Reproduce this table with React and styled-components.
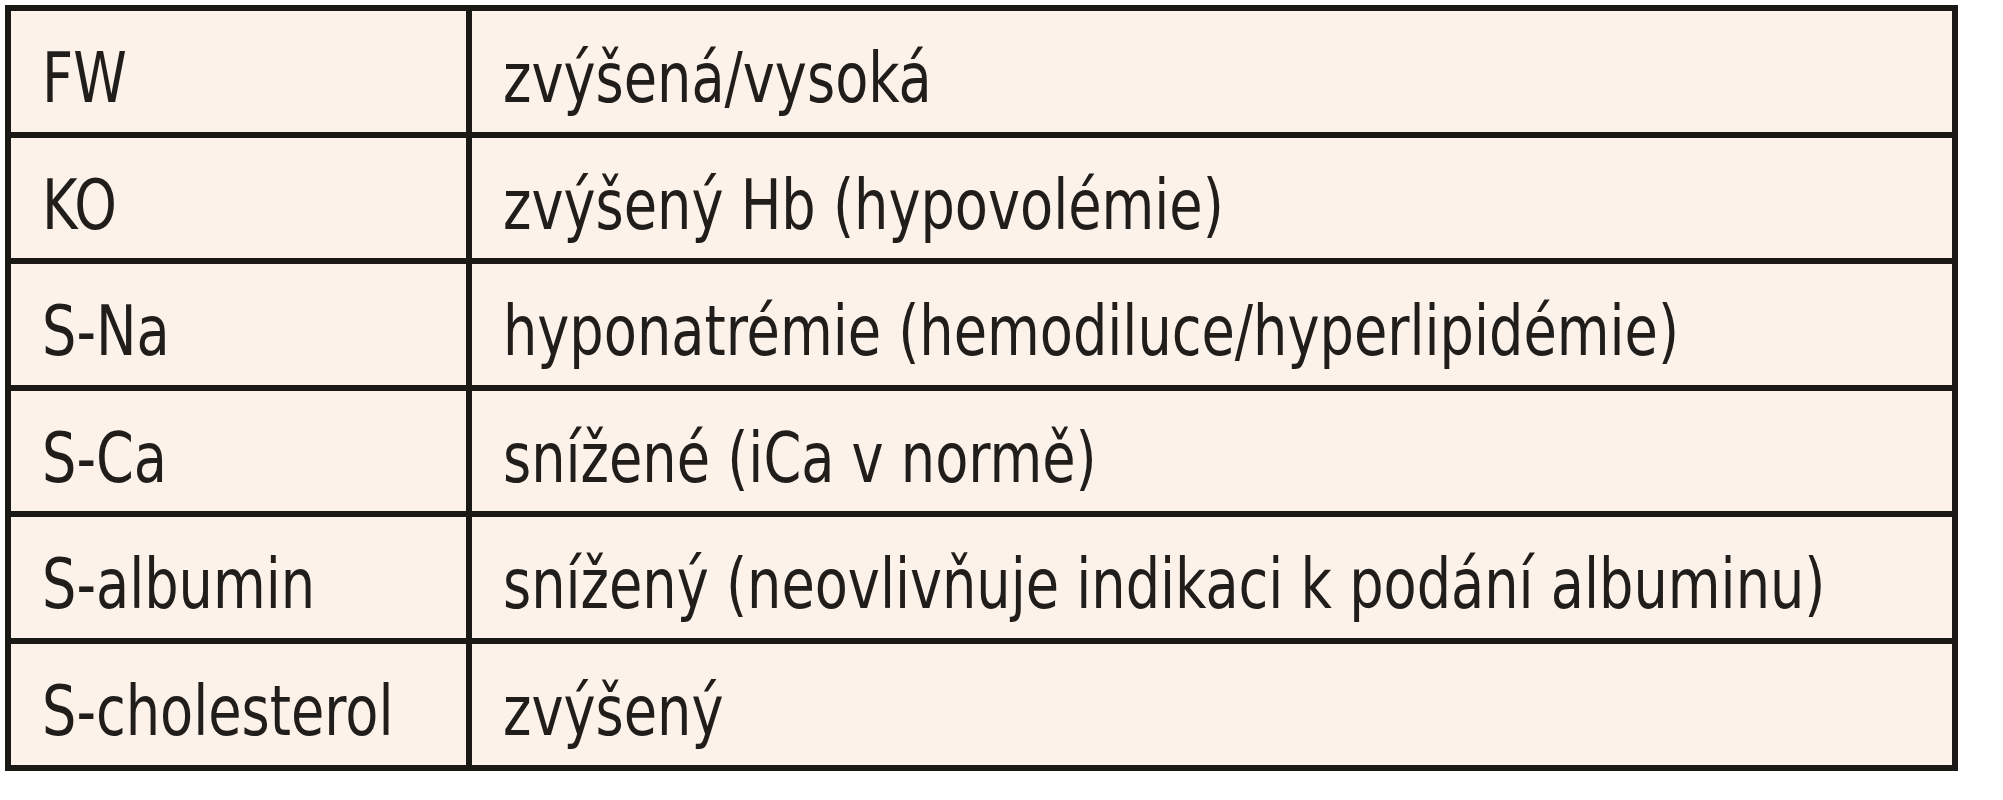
import React from "react";
import styled, { createGlobalStyle } from "styled-components";

const GlobalStyle = createGlobalStyle`
  html, body {
    margin: 0;
    padding: 0;
    background: #ffffff;
  }
`;

const Page = styled.div`
  padding: 5px;
`;

const Table = styled.div`
  display: grid;
  grid-template-columns: 455px 1480px;
  grid-auto-rows: 120.6px;
  gap: 6px;
  padding: 6px;
  width: max-content;
  background: #1b1915;
`;

const Cell = styled.div`
  box-sizing: border-box;
  background: #fdf2ea;
  padding: 14px 0 0 31px;
  white-space: nowrap;
`;

const Text = styled.span`
  display: inline-block;
  font-family: "DejaVu Sans Condensed", "DejaVu Sans", sans-serif;
  font-stretch: condensed;
  font-size: 70px;
  line-height: 106px;
  color: #201d1b;
  transform: scaleX(0.86);
  transform-origin: left center;
`;

const rows = [
  ["FW", "zvýšená/vysoká"],
  ["KO", "zvýšený Hb (hypovolémie)"],
  ["S-Na", "hyponatrémie (hemodiluce/hyperlipidémie)"],
  ["S-Ca", "snížené (iCa v normě)"],
  ["S-albumin", "snížený (neovlivňuje indikaci k podání albuminu)"],
  ["S-cholesterol", "zvýšený"],
];

export default function App() {
  return (
    <>
      <GlobalStyle />
      <Page>
        <Table>
          {rows.map(([k, v]) => (
            <React.Fragment key={k}>
              <Cell>
                <Text>{k}</Text>
              </Cell>
              <Cell>
                <Text>{v}</Text>
              </Cell>
            </React.Fragment>
          ))}
        </Table>
      </Page>
    </>
  );
}
